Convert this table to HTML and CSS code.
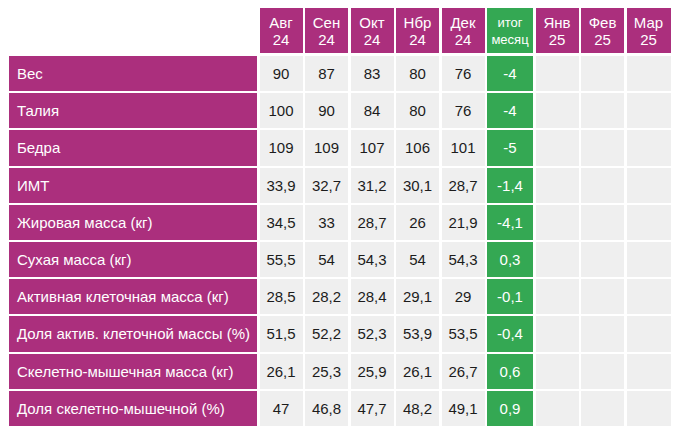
FILE: index.html
```html
<!DOCTYPE html>
<html lang="ru">
<head>
<meta charset="utf-8">
<link rel="stylesheet" href="styles.css">
</head>
<body>
<div class="table">
  <div class="head">
    <div class="corner"></div>
    <div class="hcell">Авг<br>24</div>
    <div class="hcell">Сен<br>24</div>
    <div class="hcell">Окт<br>24</div>
    <div class="hcell">Нбр<br>24</div>
    <div class="hcell">Дек<br>24</div>
    <div class="hcell total">итог<br>месяц</div>
    <div class="hcell">Янв<br>25</div>
    <div class="hcell">Фев<br>25</div>
    <div class="hcell">Мар<br>25</div>
  </div>
  <div class="body">
    <div class="label">Вес</div><div class="cell">90</div><div class="cell">87</div><div class="cell">83</div><div class="cell">80</div><div class="cell">76</div><div class="cell sum">-4</div><div class="cell"></div><div class="cell"></div><div class="cell"></div>
    <div class="label">Талия</div><div class="cell">100</div><div class="cell">90</div><div class="cell">84</div><div class="cell">80</div><div class="cell">76</div><div class="cell sum">-4</div><div class="cell"></div><div class="cell"></div><div class="cell"></div>
    <div class="label">Бедра</div><div class="cell">109</div><div class="cell">109</div><div class="cell">107</div><div class="cell">106</div><div class="cell">101</div><div class="cell sum">-5</div><div class="cell"></div><div class="cell"></div><div class="cell"></div>
    <div class="label">ИМТ</div><div class="cell">33,9</div><div class="cell">32,7</div><div class="cell">31,2</div><div class="cell">30,1</div><div class="cell">28,7</div><div class="cell sum">-1,4</div><div class="cell"></div><div class="cell"></div><div class="cell"></div>
    <div class="label">Жировая масса (кг)</div><div class="cell">34,5</div><div class="cell">33</div><div class="cell">28,7</div><div class="cell">26</div><div class="cell">21,9</div><div class="cell sum">-4,1</div><div class="cell"></div><div class="cell"></div><div class="cell"></div>
    <div class="label">Сухая масса (кг)</div><div class="cell">55,5</div><div class="cell">54</div><div class="cell">54,3</div><div class="cell">54</div><div class="cell">54,3</div><div class="cell sum">0,3</div><div class="cell"></div><div class="cell"></div><div class="cell"></div>
    <div class="label">Активная клеточная масса (кг)</div><div class="cell">28,5</div><div class="cell">28,2</div><div class="cell">28,4</div><div class="cell">29,1</div><div class="cell">29</div><div class="cell sum">-0,1</div><div class="cell"></div><div class="cell"></div><div class="cell"></div>
    <div class="label">Доля актив. клеточной массы (%)</div><div class="cell">51,5</div><div class="cell">52,2</div><div class="cell">52,3</div><div class="cell">53,9</div><div class="cell">53,5</div><div class="cell sum">-0,4</div><div class="cell"></div><div class="cell"></div><div class="cell"></div>
    <div class="label">Скелетно-мышечная масса (кг)</div><div class="cell">26,1</div><div class="cell">25,3</div><div class="cell">25,9</div><div class="cell">26,1</div><div class="cell">26,7</div><div class="cell sum">0,6</div><div class="cell"></div><div class="cell"></div><div class="cell"></div>
    <div class="label">Доля скелетно-мышечной (%)</div><div class="cell">47</div><div class="cell">46,8</div><div class="cell">47,7</div><div class="cell">48,2</div><div class="cell">49,1</div><div class="cell sum">0,9</div><div class="cell"></div><div class="cell"></div><div class="cell"></div>
  </div>
</div>
</body>
</html>
```

FILE: styles.css
```css
html, body {
  margin: 0;
  padding: 0;
  background: #ffffff;
}

body {
  padding: 8px 0 0 9px;
  font-family: "Liberation Sans", Arial, sans-serif;
}

.head,
.body {
  display: grid;
  grid-template-columns: 248px 43px 43px 43px 43px 43px 46px 43px 43px 44px;
  column-gap: 2.5px;
}

.head {
  grid-template-rows: 45px;
  margin-bottom: 3px;
}

.body {
  grid-auto-rows: 35.2px;
  row-gap: 2px;
}

.hcell {
  background: #ab2f7d;
  color: #ffffff;
  font-size: 15px;
  line-height: 17px;
  text-align: center;
  display: flex;
  align-items: center;
  justify-content: center;
}

.hcell.total {
  background: #34a853;
  font-size: 13px;
}

.label {
  background: #ab2f7d;
  color: #ffffff;
  font-size: 15px;
  display: flex;
  align-items: center;
  padding-left: 8px;
}

.cell {
  background: #efefef;
  color: #1c1c1c;
  font-size: 15px;
  display: flex;
  align-items: center;
  justify-content: center;
}

.cell.sum {
  background: #34a853;
  color: #ffffff;
}
```
